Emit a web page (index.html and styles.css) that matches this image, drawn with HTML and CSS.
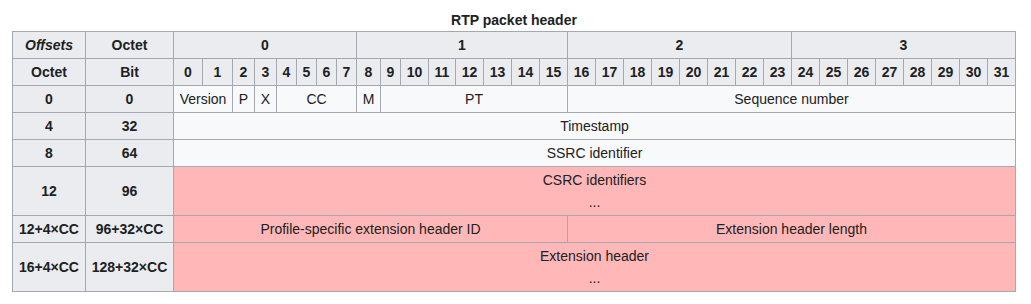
FILE: index.html
```html
<!DOCTYPE html>
<html lang="en">
<head>
<meta charset="utf-8">
<title>RTP packet header</title>
<link rel="stylesheet" href="styles.css">
</head>
<body>
<div class="wrap">
  <div class="caption">RTP packet header</div>
  <div class="tbl" role="table" aria-label="RTP packet header">
    <div class="th"><i>Offsets</i></div>
    <div class="th">Octet</div>
    <div class="th s8">0</div>
    <div class="th s8">1</div>
    <div class="th s8">2</div>
    <div class="th s8">3</div>

    <div class="th">Octet</div>
    <div class="th">Bit</div>
    <div class="th">0</div><div class="th">1</div><div class="th">2</div><div class="th">3</div>
    <div class="th">4</div><div class="th">5</div><div class="th">6</div><div class="th">7</div>
    <div class="th">8</div><div class="th">9</div><div class="th">10</div><div class="th">11</div>
    <div class="th">12</div><div class="th">13</div><div class="th">14</div><div class="th">15</div>
    <div class="th">16</div><div class="th">17</div><div class="th">18</div><div class="th">19</div>
    <div class="th">20</div><div class="th">21</div><div class="th">22</div><div class="th">23</div>
    <div class="th">24</div><div class="th">25</div><div class="th">26</div><div class="th">27</div>
    <div class="th">28</div><div class="th">29</div><div class="th">30</div><div class="th">31</div>

    <div class="th">0</div>
    <div class="th">0</div>
    <div class="td s2">Version</div>
    <div class="td">P</div>
    <div class="td">X</div>
    <div class="td s4">CC</div>
    <div class="td">M</div>
    <div class="td s7">PT</div>
    <div class="td s16">Sequence number</div>

    <div class="th">4</div>
    <div class="th">32</div>
    <div class="td s32">Timestamp</div>

    <div class="th">8</div>
    <div class="th">64</div>
    <div class="td s32">SSRC identifier</div>

    <div class="th">12</div>
    <div class="th">96</div>
    <div class="td pink s32">CSRC identifiers<br>...</div>

    <div class="th">12+4×CC</div>
    <div class="th">96+32×CC</div>
    <div class="td pink s16">Profile-specific extension header ID</div>
    <div class="td pink s16">Extension header length</div>

    <div class="th">16+4×CC</div>
    <div class="th">128+32×CC</div>
    <div class="td pink s32">Extension header<br>...</div>
  </div>
</div>
</body>
</html>
```

FILE: styles.css
```css
html, body {
  margin: 0;
  padding: 0;
  background: #ffffff;
}

body {
  font-family: "Liberation Sans", Arial, sans-serif;
  font-size: 14px;
  color: #202122;
}

.wrap {
  display: inline-flex;
  flex-direction: column;
  margin-left: 12px;
  padding-top: 9px;
}

.caption {
  text-align: center;
  font-weight: bold;
  line-height: 22px;
}

.tbl {
  display: grid;
  grid-template-columns:
    72px 87px
    28px 29px 21px 21px 19px 19px 19px 19px
    23px 19px 27px 26px 27px 27px 27px 27px
    repeat(16, 27px);
  grid-template-rows: 26px 26px 26px 26px 26px 48px 26px 48px;
  gap: 1px;
  padding: 1px;
  background: #a2a9b1;
}

.th, .td {
  display: flex;
  flex-direction: column;
  align-items: center;
  justify-content: center;
  text-align: center;
  line-height: 22px;
  white-space: nowrap;
  overflow: visible;
}

.th {
  background: #eaecf0;
  font-weight: bold;
}

.td {
  background: #f8f9fa;
}

.td.pink {
  background: #ffb7b7;
  display: block;
  padding-top: 2px;
}

.s2 { grid-column: span 2; }
.s4 { grid-column: span 4; }
.s7 { grid-column: span 7; }
.s8 { grid-column: span 8; }
.s16 { grid-column: span 16; }
.s32 { grid-column: span 32; }
```
